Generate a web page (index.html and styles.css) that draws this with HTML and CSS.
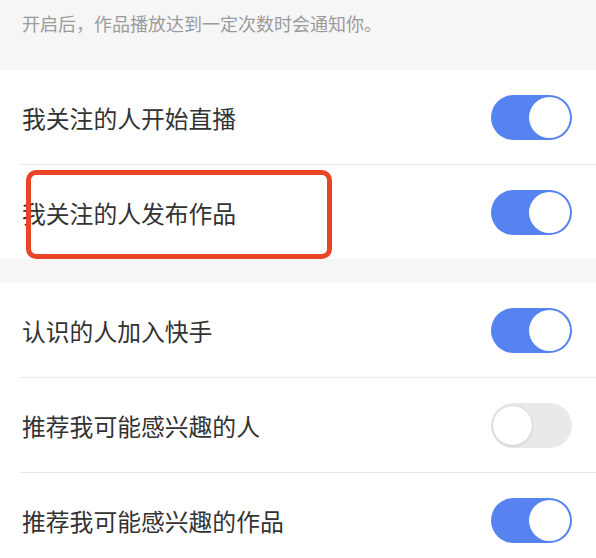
FILE: index.html
```html
<!DOCTYPE html>
<html lang="zh-CN">
<head>
<meta charset="utf-8">
<link rel="stylesheet" href="styles.css">
</head>
<body>
<div class="page">
  <div class="hint">开启后，作品播放达到一定次数时会通知你。</div>
  <div class="group">
    <div class="row">
      <span class="label">我关注的人开始直播</span>
      <span class="switch on"><span class="knob"></span></span>
    </div>
    <div class="row marked">
      <span class="label">我关注的人发布作品</span>
      <span class="switch on"><span class="knob"></span></span>
      <span class="highlight"></span>
    </div>
  </div>
  <div class="gap"></div>
  <div class="group">
    <div class="row">
      <span class="label">认识的人加入快手</span>
      <span class="switch on"><span class="knob"></span></span>
    </div>
    <div class="row">
      <span class="label">推荐我可能感兴趣的人</span>
      <span class="switch off"><span class="knob"></span></span>
    </div>
    <div class="row">
      <span class="label">推荐我可能感兴趣的作品</span>
      <span class="switch on"><span class="knob"></span></span>
    </div>
  </div>
</div>
</body>
</html>
```
FILE: styles.css
```css
html, body {
  margin: 0;
  padding: 0;
  background: #ffffff;
}
body {
  font-family: "Noto Sans CJK SC", "Noto Sans", sans-serif;
  overflow: hidden;
}
.page {
  width: 596px;
  height: 558px;
  overflow: hidden;
}
.hint {
  height: 70px;
  box-sizing: border-box;
  background: #f6f6f6;
  padding: 9px 0 0 22px;
  font-size: 18px;
  line-height: 28px;
  color: #9b9b9b;
}
.gap {
  height: 24px;
  background: #f6f6f6;
}
.group {
  background: #ffffff;
  padding-left: 20px;
}
.row {
  position: relative;
  height: 94px;
  display: flex;
  align-items: center;
  justify-content: space-between;
  padding-right: 24px;
}
.row + .row {
  border-top: 1px solid #e9e9e9;
}
.label {
  font-size: 23.8px;
  color: #333333;
  padding-left: 2px;
}
.switch {
  position: relative;
  width: 81px;
  height: 45px;
  border-radius: 23px;
  box-sizing: border-box;
}
.switch.on {
  background: #5783f0;
}
.switch.off {
  background: #e9e9e9;
}
.knob {
  position: absolute;
  top: 2px;
  width: 41px;
  height: 41px;
  border-radius: 50%;
  background: #ffffff;
  box-sizing: border-box;
}
.switch.on .knob {
  right: 2px;
}
.switch.off .knob {
  left: 1px;
  border: 1px solid #d6d6d6;
  box-shadow: 0 1px 2px rgba(0,0,0,0.08);
}
.highlight {
  position: absolute;
  left: 6px;
  top: 5px;
  width: 306px;
  height: 89px;
  box-sizing: border-box;
  border: 5px solid #ea4427;
  border-radius: 10px;
}
```
